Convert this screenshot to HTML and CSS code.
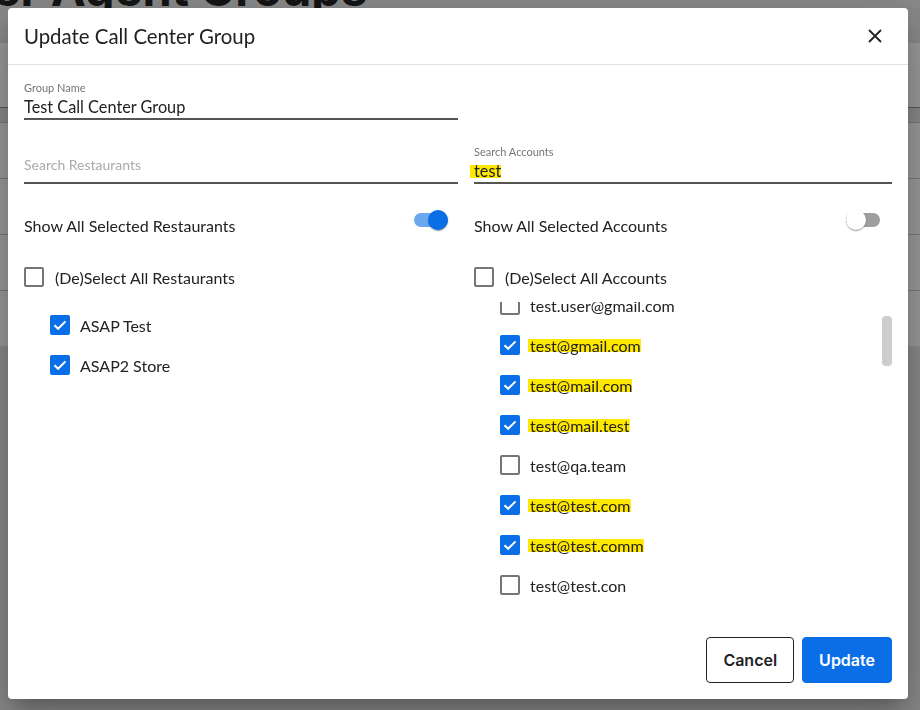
FILE: index.html
```html
<!DOCTYPE html>
<html>
  <head>
    <meta charset="UTF-8">
    <title>Call Center Agent Groups</title>
    <link rel="stylesheet" href="styles.css">
  </head>
  <body>
    <main class="page">
      <h1 class="pageTitle">Call Center Agent Groups</h1>
      <div class="table">
        <div class="tableHead"></div>
        <div class="tableGap"></div>
        <div class="tableRow"></div>
        <div class="tableRow"></div>
        <div class="tableRow"></div>
        <div class="tableRow"></div>
      </div>
    </main>

    <div class="backdrop">
      <div class="dialog">
        <header class="dialogHeader">
          <h2>Update Call Center Group</h2>
          <button class="closeButton" type="button" aria-label="Close">
            <svg width="14" height="14" viewBox="0 0 14 14"><path d="M1 1L13 13M13 1L1 13" stroke="#222" stroke-width="1.8" fill="none"/></svg>
          </button>
        </header>

        <div class="dialogBody">
          <div class="field groupName">
            <span class="fieldLabel">Group Name</span>
            <span class="fieldValue">Test Call Center Group</span>
          </div>

          <div class="columns">
            <!-- Restaurants -->
            <section class="column">
              <div class="field">
                <span class="fieldPlaceholder">Search Restaurants</span>
              </div>
              <div class="toggleRow">
                <span>Show All Selected Restaurants</span>
                <span class="switch on"><span class="knob"></span></span>
              </div>
              <label class="selectAll">
                <span class="box"></span>(De)Select All Restaurants
              </label>
              <div class="restaurantList">
                <div class="item"><span class="box checked"></span>ASAP Test</div>
                <div class="item"><span class="box checked"></span>ASAP2 Store</div>
              </div>
            </section>

            <!-- Accounts -->
            <section class="column right">
              <div class="field">
                <span class="fieldLabel">Search Accounts</span>
                <span class="fieldValue"><mark class="hit searchHit">test</mark></span>
              </div>
              <div class="toggleRow">
                <span>Show All Selected Accounts</span>
                <span class="switch"><span class="knob"></span></span>
              </div>
              <label class="selectAll">
                <span class="box"></span>(De)Select All Accounts
              </label>
              <div class="accountScroller">
                <div class="accountList">
                  <div class="item"><span class="box"></span>test.user@gmail.com</div>
                  <div class="item"><span class="box checked"></span><mark class="hit">test@gmail.com</mark></div>
                  <div class="item"><span class="box checked"></span><mark class="hit">test@mail.com</mark></div>
                  <div class="item"><span class="box checked"></span><mark class="hit">test@mail.test</mark></div>
                  <div class="item"><span class="box"></span>test@qa.team</div>
                  <div class="item"><span class="box checked"></span><mark class="hit">test@test.com</mark></div>
                  <div class="item"><span class="box checked"></span><mark class="hit">test@test.comm</mark></div>
                  <div class="item"><span class="box"></span>test@test.con</div>
                  <div class="item"><span class="box"></span>test2@test.com</div>
                </div>
                <div class="scrollTrack"><div class="scrollThumb"></div></div>
              </div>
            </section>
          </div>
        </div>

        <footer class="dialogFooter">
          <button class="button outline" type="button">Cancel</button>
          <button class="button primary" type="button">Update</button>
        </footer>
      </div>
    </div>
  </body>
</html>
```

FILE: styles.css
```css
:root {
  --blue: rgb(10, 111, 230);
  --blueLight: rgb(108, 168, 240);
  --text: rgb(34, 34, 34);
  --muted: rgb(117, 117, 117);
  --line: rgb(85, 85, 85);
  --hit: rgb(255, 232, 0);
}
body {
  margin: 0;
  background-color: rgb(228, 228, 228);
  color: var(--text);
  font-family: Lato, "Open Sans", sans-serif;
  overflow: hidden;
}

/* page behind the dialog */
.page { padding: 0 24px; }
.pageTitle {
  font-family: Inter, sans-serif;
  font-weight: 700;
  font-size: 47px;
  line-height: 48px;
  white-space: nowrap;
  margin: -35px 0 0 -239px;
}
.table {
  margin: 30px -24px 0;
}
.tableHead {
  height: 64px;
  background-color: #fff;
}
.tableGap {
  height: 14px;
  border-top: 1px solid rgb(150, 150, 150);
}
.tableRow {
  height: 55px;
  background-color: #fff;
  border-top: 1px solid rgb(200, 200, 200);
}

/* dialog */
.backdrop {
  position: fixed;
  inset: 0;
  background-color: rgba(0, 0, 0, 0.4);
  display: flex;
  align-items: flex-start;
  padding: 8px;
}
.dialog {
  width: 900px;
  height: 691px;
  background-color: #fff;
  border-radius: 4px;
  display: flex;
  flex-direction: column;
  box-shadow: 0 11px 15px -7px rgba(0, 0, 0, 0.2), 0 24px 38px 3px rgba(0, 0, 0, 0.14), 0 9px 46px 8px rgba(0, 0, 0, 0.12);
}
.dialogHeader {
  height: 56px;
  display: flex;
  align-items: center;
  justify-content: space-between;
  padding: 0 26px 0 16px;
  border-bottom: 1px solid rgb(224, 224, 224);
}
.dialogHeader h2 {
  margin: 0;
  font-size: 20.4px;
  font-weight: 400;
}
.closeButton {
  border: 0;
  background: none;
  padding: 0;
  width: 14px;
  height: 14px;
  display: flex;
}
.dialogBody {
  flex: 1;
  padding: 16px 16px 0;
}

/* text fields */
.field {
  box-sizing: border-box;
  height: 39px;
  display: flex;
  flex-direction: column;
  justify-content: flex-end;
  border-bottom: 2px solid var(--line);
}
.groupName { width: 434px; }
.fieldLabel {
  font-size: 11px;
  line-height: 14px;
  color: var(--muted);
  margin-bottom: 2px;
}
.fieldValue {
  font-size: 16.3px;
  line-height: 20px;
  padding-bottom: 1px;
}
.fieldPlaceholder {
  font-size: 14px;
  line-height: 20px;
  color: rgb(170, 170, 170);
  padding-bottom: 7px;
}
mark.hit {
  color: inherit;
  display: inline-block;
  padding-left: 2px;
  margin-left: -2px;
  background: linear-gradient(var(--hit), var(--hit)) center / 100% 13px no-repeat;
}
mark.searchHit {
  padding-left: 4px;
  margin-left: -4px;
}

.columns {
  display: grid;
  grid-template-columns: 434px 418px;
  column-gap: 16px;
  margin-top: 25px;
}

/* toggles */
.toggleRow {
  height: 40px;
  margin-top: 21px;
  display: flex;
  align-items: center;
  justify-content: space-between;
  padding-right: 10px;
  font-size: 16px;
}
.right .toggleRow { padding-right: 12px; }
.switch {
  width: 34px;
  height: 14px;
  border-radius: 7px;
  background-color: rgb(158, 158, 158);
  display: flex;
  align-items: center;
  margin-bottom: 10px;
}
.switch .knob {
  width: 20px;
  height: 20px;
  flex: none;
  border-radius: 50%;
  background-color: #fff;
  box-shadow: 0 2px 1px -1px rgba(0, 0, 0, 0.2), 0 1px 1px rgba(0, 0, 0, 0.14), 0 1px 3px rgba(0, 0, 0, 0.12);
}
.switch.on {
  background-color: var(--blueLight);
  justify-content: flex-end;
}
.switch.on .knob { background-color: var(--blue); }

/* checkboxes */
.box {
  width: 20px;
  height: 20px;
  flex: none;
  box-sizing: border-box;
  border: 2px solid var(--muted);
  border-radius: 2px;
  margin-right: 10px;
}
.box.checked {
  border: 0;
  background: var(--blue) url("data:image/svg+xml,%3Csvg xmlns='http://www.w3.org/2000/svg' viewBox='0 0 20 20'%3E%3Cpath d='M4.5 10.2l3.6 3.6 7.4-7.4' fill='none' stroke='white' stroke-width='2'/%3E%3C/svg%3E") center / 20px 20px no-repeat;
}
.selectAll {
  height: 40px;
  margin-top: 12px;
  display: flex;
  align-items: center;
  font-size: 16px;
}
.selectAll .box { margin-right: 11px; }
.item {
  height: 40px;
  display: flex;
  align-items: center;
  padding-left: 26px;
  font-size: 16px;
}
.restaurantList { margin-top: 8px; }

.accountScroller {
  margin-top: 5px;
  height: 309px;
  display: flex;
}
.accountList {
  flex: 1;
  overflow: hidden;
}
.accountList .item:first-child { margin-top: -17px; }
.scrollTrack { width: 10px; }
.scrollThumb {
  margin-top: 14px;
  height: 50px;
  border-radius: 4px;
  background-color: rgb(205, 205, 205);
}

/* footer */
.dialogFooter {
  display: flex;
  justify-content: flex-end;
  gap: 8px;
  padding: 0 16px 16px;
}
.button {
  height: 46px;
  padding: 0 16px;
  border-radius: 4px;
  font-family: Inter, sans-serif;
  font-size: 16px;
  font-weight: 600;
}
.button.outline {
  background-color: #fff;
  border: 1px solid var(--text);
  color: var(--text);
}
.button.primary {
  background-color: var(--blue);
  border: 1px solid var(--blue);
  color: #fff;
}
```
